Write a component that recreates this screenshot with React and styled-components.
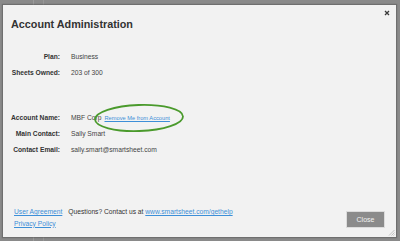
import React from 'react';
import styled, { createGlobalStyle } from 'styled-components';

const Global = createGlobalStyle`
  html, body {
    margin: 0;
    padding: 0;
    width: 400px;
    height: 241px;
    overflow: hidden;
  }
  body {
    background-color: #8a8a8a;
    background-image:
      linear-gradient(90deg, transparent 33px, #9b9b9b 33px, #9b9b9b 34px, transparent 34px),
      linear-gradient(90deg, transparent 43px, #979797 43px, #979797 44px, transparent 44px);
    font-family: 'Liberation Sans', Arial, sans-serif;
  }
`;

const Dialog = styled.div`
  position: relative;
  box-sizing: border-box;
  width: 393px;
  height: 232px;
  margin: 5px 0 0 3px;
  background: #f2f2f2;
  box-shadow: 0 0 1px 1px rgba(60, 60, 60, 0.35);
  display: flex;
  flex-direction: column;
`;

const Header = styled.div`
  display: flex;
  justify-content: space-between;
  align-items: flex-start;
  padding: 5px 6px 0 8px;
`;

const Title = styled.h1`
  margin: 7.6px 0 0;
  font-size: 10.8px;
  line-height: 13px;
  font-weight: bold;
  color: #333;
`;

const CloseX = styled.button`
  border: 0;
  padding: 0;
  background: none;
  width: 6px;
  height: 6px;
  display: flex;
  cursor: pointer;
`;

const Details = styled.div`
  display: grid;
  grid-template-columns: 49px auto;
  column-gap: 11px;
  grid-auto-rows: 15.6px;
  align-items: center;
  padding: 0 0 0 8px;
  margin-top: ${(p) => p.$top}px;
`;

const Label = styled.div`
  text-align: right;
  font-size: 6.7px;
  font-weight: bold;
  color: #333;
  white-space: nowrap;
`;

const Value = styled.div`
  position: relative;
  font-size: 6.7px;
  color: #444;
  white-space: nowrap;
  display: flex;
  align-items: center;
  gap: 3px;
`;

const SmallLink = styled.a`
  font-size: 5.7px;
  color: #3d8fd8;
  text-decoration: underline;
`;

const Highlight = styled.svg`
  position: absolute;
  left: 22px;
  top: -11px;
  width: 92px;
  height: 30px;
  pointer-events: none;
`;

const Footer = styled.div`
  margin-top: auto;
  display: flex;
  align-items: flex-start;
  padding: 0 11px 8px 11px;
`;

const FooterLinks = styled.div`
  display: flex;
  flex-direction: column;
  font-size: 6.7px;
  line-height: 11.5px;
`;

const Link = styled.a`
  color: #3d8fd8;
  text-decoration: underline;
  white-space: nowrap;
`;

const Help = styled.div`
  margin-left: 6px;
  font-size: 6.7px;
  line-height: 11.5px;
  color: #333;
  white-space: nowrap;
  flex: 1;
`;

const CloseButton = styled.button`
  margin-top: 4.5px;
  width: 39px;
  height: 17px;
  box-sizing: border-box;
  border: 1px solid #dcdcdc;
  background: #8b8b8b;
  color: #f2f2f2;
  font-family: 'Liberation Sans', Arial, sans-serif;
  font-size: 7px;
  padding: 0;
  cursor: pointer;
`;

const Grip = styled.svg`
  position: absolute;
  right: 1px;
  bottom: 1px;
  width: 7px;
  height: 7px;
`;

export default function App() {
  return (
    <>
      <Global />
      <Dialog>
        <Header>
          <Title>Account Administration</Title>
          <CloseX aria-label="Close">
            <svg width="6" height="6" viewBox="0 0 6 6">
              <path d="M1 1 L5 5 M5 1 L1 5" stroke="#3a3a3a" strokeWidth="1.3" />
            </svg>
          </CloseX>
        </Header>

        <Details $top={18.4}>
          <Label>Plan:</Label>
          <Value>Business</Value>
          <Label>Sheets Owned:</Label>
          <Value>203 of 300</Value>
        </Details>

        <Details $top={30}>
          <Label>Account Name:</Label>
          <Value>
            MBF Corp
            <SmallLink href="#">Remove Me from Account</SmallLink>
            <Highlight viewBox="0 0 92 30">
              <ellipse
                cx="46"
                cy="15"
                rx="44"
                ry="13"
                transform="rotate(-2 46 15)"
                fill="none"
                stroke="#4a9a2c"
                strokeWidth="1.8"
              />
            </Highlight>
          </Value>
          <Label>Main Contact:</Label>
          <Value>Sally Smart</Value>
          <Label>Contact Email:</Label>
          <Value>sally.smart@smartsheet.com</Value>
        </Details>

        <Footer>
          <FooterLinks>
            <Link href="#">User Agreement</Link>
            <Link href="#">Privacy Policy</Link>
          </FooterLinks>
          <Help>
            Questions? Contact us at <Link href="#">www.smartsheet.com/gethelp</Link>
          </Help>
          <CloseButton>Close</CloseButton>
        </Footer>

        <Grip viewBox="0 0 7 7">
          <path d="M6.5 1 L1 6.5 M6.5 3.5 L3.5 6.5 M6.5 5.5 L5.5 6.5" stroke="#b5b5b5" strokeWidth="0.8" />
        </Grip>
      </Dialog>
    </>
  );
}
